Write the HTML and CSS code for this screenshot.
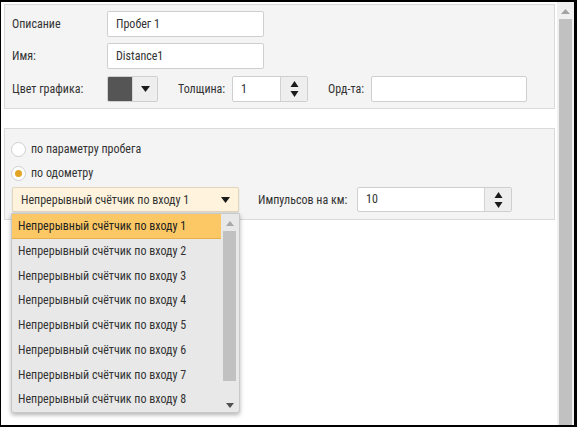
FILE: index.html
```html
<!DOCTYPE html>
<html lang="ru">
<head>
<meta charset="utf-8">
<link rel="stylesheet" href="styles.css">
</head>
<body>
<div class="window">
  <div class="content">
    <div class="panel panel-top">
      <div class="row">
        <span class="label label-main">Описание</span>
        <div class="input input-wide">Пробег 1</div>
      </div>
      <div class="row">
        <span class="label label-main">Имя:</span>
        <div class="input input-wide">Distance1</div>
      </div>
      <div class="row">
        <span class="label label-main">Цвет графика:</span>
        <div class="color-picker">
          <div class="swatch"></div>
          <div class="color-btn">
            <svg width="9" height="6" viewBox="0 0 9 6"><path d="M0 0H9L4.5 6Z" fill="#1a1a1a"/></svg>
          </div>
        </div>
        <span class="label label-thick">Толщина:</span>
        <div class="spin spin-thick">
          <div class="spin-value">1</div>
          <div class="spin-btn">
            <svg width="9" height="18" viewBox="0 0 9 18"><path d="M4.5 1L8.5 7H0.5Z" fill="#1a1a1a"/><path d="M0.5 11H8.5L4.5 17Z" fill="#1a1a1a"/></svg>
          </div>
        </div>
        <span class="label label-ord">Орд-та:</span>
        <div class="input input-ord"></div>
      </div>
    </div>

    <div class="panel panel-bottom">
      <div class="radio-row">
        <span class="radio"></span>
        <span class="radio-text">по параметру пробега</span>
      </div>
      <div class="radio-row">
        <span class="radio radio-on"><span class="radio-dot"></span></span>
        <span class="radio-text">по одометру</span>
      </div>
      <div class="row row-select">
        <div class="select-wrap">
          <div class="select">
            <span>Непрерывный счётчик по входу 1</span>
            <svg width="9" height="6" viewBox="0 0 9 6"><path d="M0 0H9L4.5 6Z" fill="#1a1a1a"/></svg>
          </div>
          <div class="dropdown">
            <ul class="options">
              <li class="option option-active">Непрерывный счётчик по входу 1</li>
              <li class="option">Непрерывный счётчик по входу 2</li>
              <li class="option">Непрерывный счётчик по входу 3</li>
              <li class="option">Непрерывный счётчик по входу 4</li>
              <li class="option">Непрерывный счётчик по входу 5</li>
              <li class="option">Непрерывный счётчик по входу 6</li>
              <li class="option">Непрерывный счётчик по входу 7</li>
              <li class="option">Непрерывный счётчик по входу 8</li>
            </ul>
            <div class="list-scroll">
              <svg class="sb-arrow" width="8" height="5" viewBox="0 0 8 5"><path d="M0 5H8L4 0Z" fill="#a8a8a8"/></svg>
              <div class="list-thumb"></div>
              <svg class="sb-arrow sb-arrow-down" width="8" height="5" viewBox="0 0 8 5"><path d="M0 0H8L4 5Z" fill="#505050"/></svg>
            </div>
          </div>
        </div>
        <span class="label label-imp">Импульсов на км:</span>
        <div class="spin spin-imp">
          <div class="spin-value">10</div>
          <div class="spin-btn">
            <svg width="9" height="18" viewBox="0 0 9 18"><path d="M4.5 1L8.5 7H0.5Z" fill="#1a1a1a"/><path d="M0.5 11H8.5L4.5 17Z" fill="#1a1a1a"/></svg>
          </div>
        </div>
      </div>
    </div>
  </div>
  <div class="scrollbar">
    <svg class="main-arrow" width="9" height="5" viewBox="0 0 9 5"><path d="M0 5H9L4.5 0Z" fill="#a3a3a3"/></svg>
    <div class="main-thumb"></div>
  </div>
</div>
</body>
</html>
```

FILE: styles.css
```css
* { box-sizing: border-box; }
html, body { margin: 0; padding: 0; background: #fff; }
body {
  font-family: "Roboto Condensed", Roboto, "Liberation Sans", sans-serif;
  font-size: 12px;
  color: #333;
}
.window {
  width: 577px;
  height: 427px;
  border: 1px solid #000;
  border-top-width: 2px;
  border-right-width: 3px;
  border-bottom-width: 2px;
  display: flex;
  background: #fff;
  overflow: hidden;
}
.content {
  flex: 1;
  padding: 2px 2px 0 3px;
}
.panel {
  background: #f4f4f4;
  border: 1px solid #dadada;
}
.panel-top {
  height: 105px;
  padding: 6px 7px 0 7px;
}
.row {
  display: flex;
  align-items: center;
  height: 26px;
  margin-bottom: 7px;
}
.row:first-child { margin-bottom: 6px; }
.label { white-space: nowrap; }
.label-main { width: 95px; flex: none; }
.input {
  height: 26px;
  background: #fff;
  border: 1px solid #cfcfcf;
  border-radius: 2px;
  padding-left: 8px;
  line-height: 24px;
  color: #333;
}
.input-wide { width: 157px; }
.color-picker {
  display: flex;
  width: 51px;
  height: 26px;
  border: 1px solid #cfcfcf;
  border-radius: 2px;
  overflow: hidden;
}
.swatch { width: 24px; background: #555; }
.color-btn {
  flex: 1;
  background: #eee;
  border-left: 1px solid #d6d6d6;
  display: flex;
  align-items: center;
  justify-content: center;
}
.label-thick { margin-left: 20px; width: 54px; }
.spin {
  display: flex;
  height: 26px;
  border: 1px solid #cfcfcf;
  border-radius: 2px;
  overflow: hidden;
  background: #fff;
}
.spin-value {
  flex: 1;
  padding-left: 8px;
  line-height: 24px;
  color: #333;
}
.spin-btn {
  width: 27px;
  background: #eee;
  border-left: 1px solid #d2d2d2;
  display: flex;
  align-items: center;
  justify-content: center;
}
.spin-thick { width: 76px; }
.label-ord { margin-left: 20px; width: 43px; }
.input-ord { width: 156px; }

.panel-bottom {
  margin-top: 19px;
  height: 92px;
  padding: 8px 7px 0 7px;
}
.radio-row {
  display: flex;
  align-items: center;
  height: 24px;
}
.radio {
  width: 15px;
  height: 15px;
  border-radius: 50%;
  background: #fff;
  border: 1px solid #cfcfcf;
  margin-left: -1px;
  margin-right: 5px;
  display: flex;
  align-items: center;
  justify-content: center;
  flex: none;
}
.radio-dot {
  width: 7px;
  height: 7px;
  border-radius: 50%;
  background: #e3a325;
}
.radio-text { color: #333; }
.row-select { margin-top: 2px; height: 25px; margin-bottom: 0; }
.select-wrap { position: relative; }
.select {
  width: 227px;
  height: 25px;
  background: #fff3dd;
  border: 1px solid #e2d6bd;
  border-radius: 2px;
  box-shadow: 0 1px 2px rgba(0,0,0,0.12);
  display: flex;
  align-items: center;
  justify-content: space-between;
  padding: 0 8px 0 8px;
  color: #333;
}
.dropdown {
  position: absolute;
  left: -1px;
  top: 26px;
  width: 229px;
  height: 200px;
  background: #e8e8e8;
  border: 1px solid #c9c9c9;
  border-radius: 0 0 3px 3px;
  box-shadow: 0 2px 4px rgba(0,0,0,0.3);
  display: flex;
  z-index: 5;
}
.options {
  list-style: none;
  margin: 0;
  padding: 0;
  width: 209px;
}
.option {
  height: 24.75px;
  line-height: 24.75px;
  padding-left: 6px;
  white-space: nowrap;
  color: #333;
}
.option-active {
  background: #fcc865;
  color: #222;
  box-shadow: inset 0 -1px 0 #e8b04a;
}
.list-scroll {
  width: 17px;
  display: flex;
  flex-direction: column;
  align-items: center;
  padding-top: 7px;
}
.sb-arrow { flex: none; }
.list-thumb {
  width: 13px;
  height: 150px;
  background: #c1c1c1;
  margin-top: 5px;
}
.sb-arrow-down { margin-top: 22px; }
.label-imp { margin-left: 19px; width: 99px; }
.spin-imp { width: 155px; height: 25px; }
.spin-imp .spin-value { line-height: 23px; }

.scrollbar {
  width: 17px;
  background: #f0f0f0;
  display: flex;
  flex-direction: column;
  align-items: center;
  padding-top: 7px;
}
.main-arrow { flex: none; }
.main-thumb {
  width: 13px;
  flex: 1;
  margin-top: 5px;
  background: #c1c1c1;
}
```
